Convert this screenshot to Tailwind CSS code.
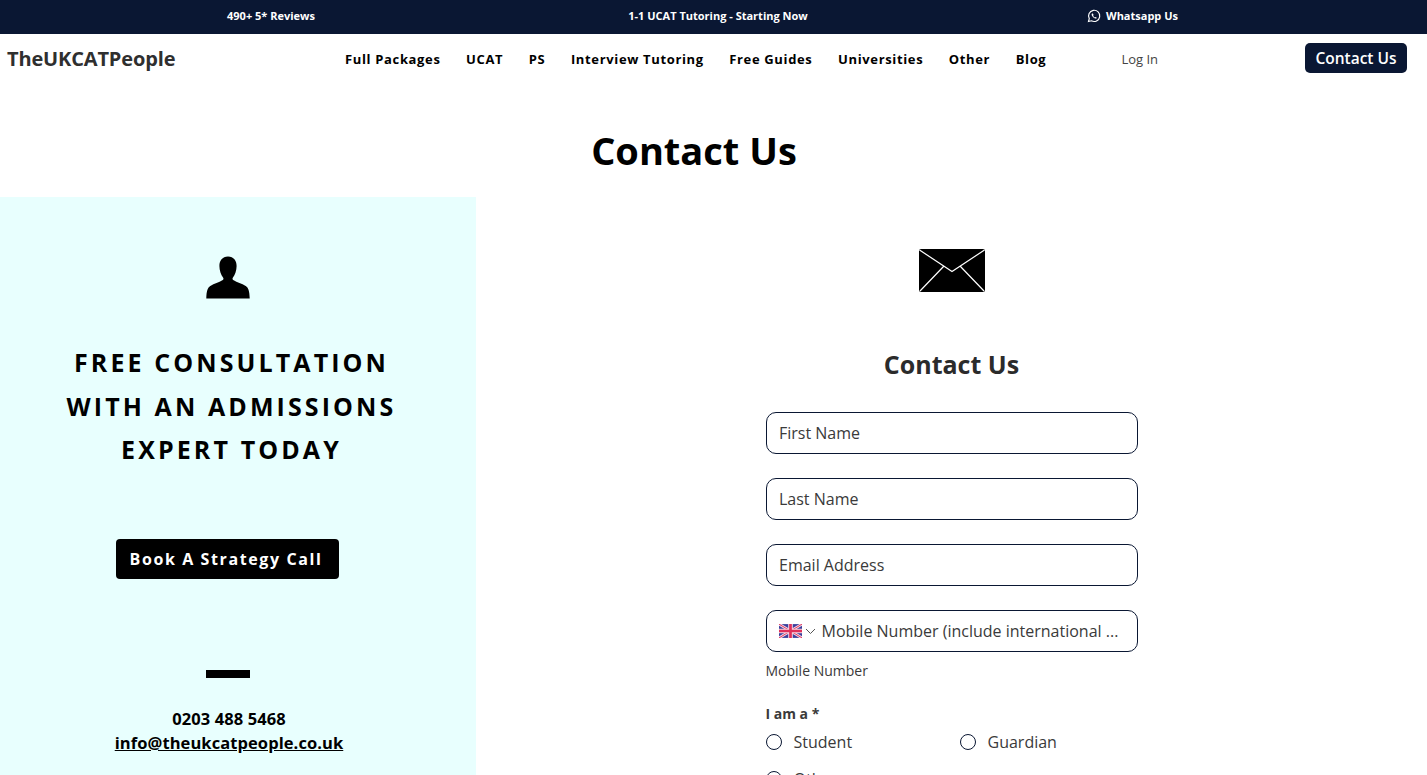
<!DOCTYPE html>
<html lang="en">
<head>
    <meta charset="UTF-8">
    <title>Contact Us</title>
    <script src="https://cdn.jsdelivr.net/npm/@tailwindcss/browser@4"></script>
</head>
<body class="bg-white font-['Open_Sans',sans-serif] h-screen overflow-hidden">
    <!-- Top bar -->
    <div class="h-[34px] pb-[2px] bg-[#0a1733] text-white text-[11px] font-bold relative flex items-center">
        <div class="w-[542px] text-center">490+ 5* Reviews</div>
        <div class="w-[352px] text-center">1-1 UCAT Tutoring - Starting Now</div>
        <div class="flex items-center gap-[5px] ml-[193px]">
            <svg class="w-[14px] h-[14px]" viewBox="0 0 24 24" fill="none" stroke="white" stroke-width="2"><path d="M2.500 21.500l1.400-5A9.600 9.600 0 1 1 7.600 20.200z"/><path d="M8.600 7.600c-.9.9-.9 2.400.2 4.400 1.200 2 3 3.600 5 4.300 1.500.5 2.600 0 3-1.300l-2.300-1.500-1.100 1c-1.200-.5-2.300-1.600-3-3l.9-1.100-1.200-2.600z" fill="white" stroke="none"/></svg>
            <span>Whatsapp Us</span>
        </div>
    </div>

    <!-- Nav -->
    <div class="h-[50px] flex items-center relative">
        <div class="ml-[7px] w-[338px] text-[20px] font-bold text-[#2f2f2f] tracking-[-0.15px]">TheUKCATPeople</div>
        <nav class="flex items-center mt-[2px] gap-[25.500px] text-[13px] font-bold tracking-[0.65px] text-black">
            <a>Full Packages</a>
            <a>UCAT</a>
            <a>PS</a>
            <a>Interview Tutoring</a>
            <a>Free Guides</a>
            <a>Universities</a>
            <a>Other</a>
            <a>Blog</a>
        </nav>
        <a class="ml-[75px] mt-[2px] text-[13px] text-[#444]">Log In</a>
        <button class="ml-auto mr-[20px] mb-[2px] pt-[2px] w-[102px] h-[30px] rounded-[5px] bg-[#0a1733] text-white text-[15.500px] font-semibold">Contact Us</button>
    </div>

    <h1 class="h-[113px] pt-[38px] text-center text-[38px] leading-[56px] font-bold text-black w-[1388px]">Contact Us</h1>

    <div class="flex h-[578px]">
        <!-- Left panel -->
        <div class="w-[476px] bg-[#e8fffe] flex flex-col items-center shrink-0">
            <svg class="mt-[59px] ml-[-20px] w-[44px] h-[43px] shrink-0" viewBox="0 0 46 43" preserveAspectRatio="none" fill="black"><path d="M23 0.500c6 0 9 4.300 9 9.500 0 4.500-1.700 9-3.800 11.500-.8 1-.6 2 .7 2.800 3.500 2 8.500 3.300 12.600 5.700 2.800 1.700 4 5 4.200 12.500H.3C.5 35 1.700 31.700 4.500 30c4.100-2.400 9.100-3.700 12.600-5.700 1.300-.8 1.500-1.800.7-2.800C15.700 19 14 14.500 14 10c0-5.200 3-9.500 9-9.500z"/></svg>
            <h2 class="mt-[42px] ml-[-13px] text-[25px] leading-[43.600px] font-bold tracking-[3.100px] text-black text-center">FREE CONSULTATION<br>WITH AN ADMISSIONS<br>EXPERT TODAY</h2>
            <button class="mt-[67px] ml-[-21px] pr-[3px] w-[223px] h-[40px] rounded-[4px] bg-black text-white text-[16px] font-bold tracking-[1.600px] shrink-0">Book A Strategy Call</button>
            <div class="mt-[91px] ml-[-21px] w-[44px] h-[8px] bg-black shrink-0"></div>
            <div class="mt-[29px] text-[16.500px] leading-[24px] font-bold tracking-[0.08px] text-black text-center ml-[-18px]">
                <div>0203 488 5468</div>
                <a class="underline">info@theukcatpeople.co.uk</a>
            </div>
        </div>

        <!-- Form -->
        <div class="flex-1 flex flex-col items-center">
            <svg class="mt-[52px] w-[66px] h-[43px] shrink-0" viewBox="0 0 66 43">
                <rect width="66" height="43" rx="2" fill="black"/>
                <path d="M0.500 1l32.500 21.500L65.500 1M25 17L1 42M41 17l24 25" fill="none" stroke="white" stroke-width="1.200"/>
            </svg>
            <h2 class="mt-[54px] text-[25px] leading-[36px] font-bold text-[#2b2b2b] shrink-0">Contact Us</h2>
            <div class="mt-[30px] w-[372px] text-[#3a3a3a] shrink-0">
                <div class="h-[42px] border border-[#0a1733] rounded-[10px] pl-[12.500px] flex items-center text-[16px]">First Name</div>
                <div class="mt-[24px] h-[42px] border border-[#0a1733] rounded-[10px] pl-[12.500px] flex items-center text-[16px]">Last Name</div>
                <div class="mt-[24px] h-[42px] border border-[#0a1733] rounded-[10px] pl-[12.500px] flex items-center text-[16px]">Email Address</div>
                <div class="mt-[24px] h-[42px] border border-[#0a1733] rounded-[10px] px-3 flex items-center text-[16px]">
                    <svg class="w-[23px] h-[14px] shrink-0" viewBox="0 0 60 36">
                        <rect width="60" height="36" fill="#3a3f9c"/>
                        <path d="M0 0L60 36M60 0L0 36" stroke="#f4d8e4" stroke-width="7"/>
                        <path d="M0 0L60 36M60 0L0 36" stroke="#e0305a" stroke-width="2.500"/>
                        <path d="M30 0V36M0 18H60" stroke="#f4d8e4" stroke-width="12"/>
                        <path d="M30 0V36M0 18H60" stroke="#e0305a" stroke-width="7"/>
                    </svg>
                    <svg class="ml-[3px] w-[11px] h-[7px] shrink-0" viewBox="0 0 11 7" fill="none" stroke="#555" stroke-width="1"><path d="M1 1l4.500 4.500L10 1"/></svg>
                    <span class="ml-[6px] whitespace-nowrap">Mobile Number (include international ...</span>
                </div>
                <div class="mt-[9px] text-[14px] leading-[19px]">Mobile Number</div>
                <div class="mt-[24px] text-[14px] leading-[19px] font-bold">I am a *</div>
                <div class="mt-[8px] grid grid-cols-[194px_1fr] gap-y-[15px] text-[16px] leading-[22px]">
                    <label class="flex items-center gap-[12px]"><span class="w-4 h-4 rounded-full border border-[#0a1733]"></span>Student</label>
                    <label class="flex items-center gap-[12px]"><span class="w-4 h-4 rounded-full border border-[#0a1733]"></span>Guardian</label>
                    <label class="flex items-center gap-[12px]"><span class="w-4 h-4 rounded-full border border-[#0a1733]"></span>Other</label>
                </div>
            </div>
        </div>
    </div>
</body>
</html>
